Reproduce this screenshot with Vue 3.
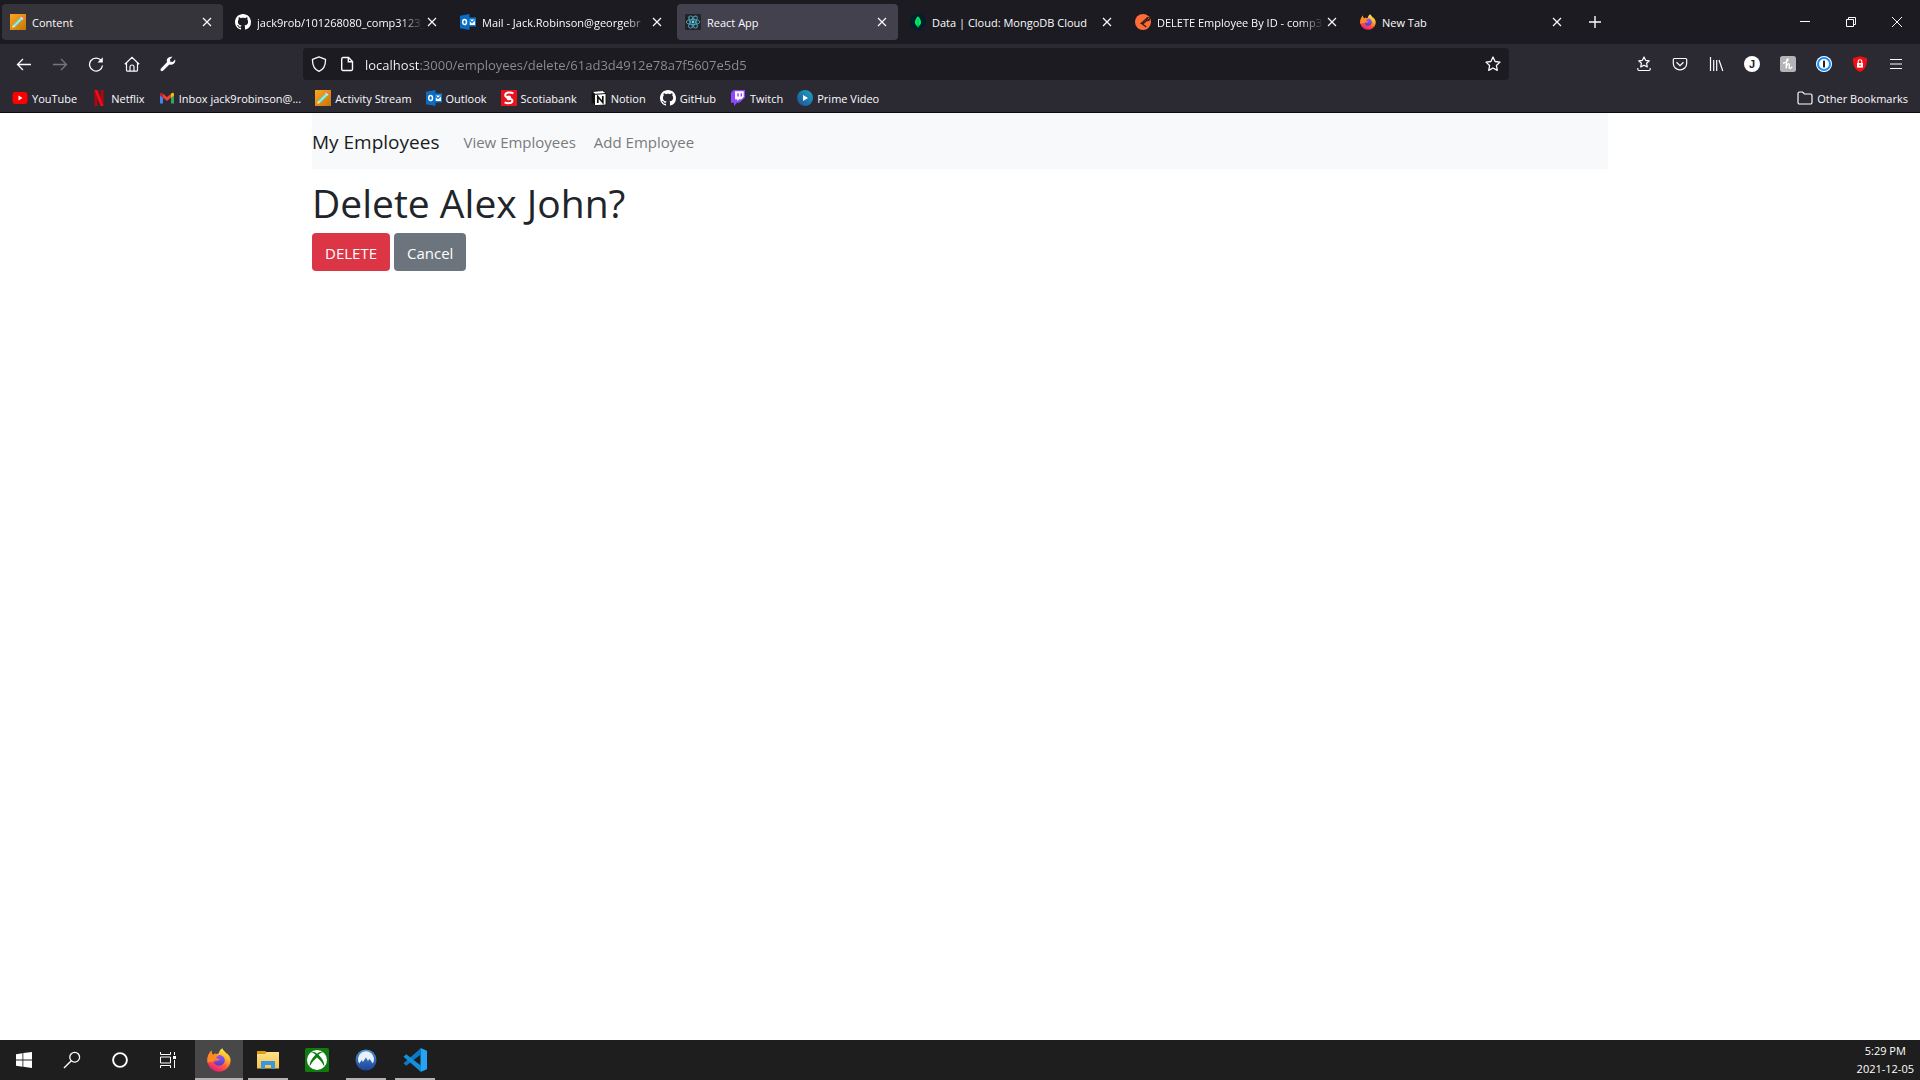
<script setup>
const tabs = [
  { icon: 'pencil', title: 'Content', state: 'hovered' },
  { icon: 'github', title: 'jack9rob/101268080_comp3123_', long: true },
  { icon: 'outlook', title: 'Mail - Jack.Robinson@georgebr', long: true },
  { icon: 'react', title: 'React App', state: 'selected' },
  { icon: 'mongo', title: 'Data | Cloud: MongoDB Cloud' },
  { icon: 'postman', title: 'DELETE Employee By ID - comp3', long: true },
  { icon: 'firefox', title: 'New Tab' },
]

const navButtons = [
  { icon: 'back', label: 'Back' },
  { icon: 'forward', label: 'Forward', dim: true },
  { icon: 'reload', label: 'Reload' },
  { icon: 'home', label: 'Home' },
  { icon: 'wrench', label: 'Developer tools' },
]

const toolButtons = [
  { icon: 'bookmarks', label: 'Bookmarks menu' },
  { icon: 'pocket', label: 'Save to Pocket' },
  { icon: 'library', label: 'Library' },
  { initial: 'J', label: 'Account' },
  { icon: 'honey', label: 'Coupons' },
  { icon: 'onepass', label: 'Password manager' },
  { icon: 'shieldlock', label: 'Privacy protection' },
  { icon: 'menu', label: 'Application menu' },
]

const bookmarks = [
  { icon: 'youtube', title: 'YouTube' },
  { icon: 'netflix', title: 'Netflix' },
  { icon: 'gmail', title: 'Inbox jack9robinson@...' },
  { icon: 'pencil', title: 'Activity Stream' },
  { icon: 'outlook', title: 'Outlook' },
  { icon: 'scotiabank', title: 'Scotiabank' },
  { icon: 'notion', title: 'Notion' },
  { icon: 'github', title: 'GitHub' },
  { icon: 'twitch', title: 'Twitch' },
  { icon: 'prime', title: 'Prime Video' },
]

const systemButtons = [
  { icon: 'windows', label: 'Start' },
  { icon: 'search', label: 'Search' },
  { icon: 'cortana', label: 'Cortana' },
  { icon: 'taskview', label: 'Task View' },
]

const apps = [
  { icon: 'firefox', label: 'Firefox', state: 'active' },
  { icon: 'explorer', label: 'File Explorer', state: 'running' },
  { icon: 'xbox', label: 'Xbox' },
  { icon: 'nord', label: 'NordVPN', state: 'running' },
  { icon: 'vscode', label: 'Visual Studio Code', state: 'running' },
]

const url = 'localhost:3000/employees/delete/61ad3d4912e78a7f5607e5d5'
</script>

<template>
  <div class="screen">
    <svg class="sprite" width="0" height="0" aria-hidden="true">
      <defs>
        <linearGradient id="g-orange" x1="0" y1="0" x2="1" y2="1">
          <stop offset="0" stop-color="#ffa51f" /><stop offset="1" stop-color="#c4750a" />
        </linearGradient>
        <linearGradient id="g-fox" x1="0.8" y1="0" x2="0.3" y2="1">
          <stop offset="0" stop-color="#fff44f" /><stop offset="0.35" stop-color="#ffb52a" />
          <stop offset="0.65" stop-color="#ff5a36" /><stop offset="1" stop-color="#e31587" />
        </linearGradient>
        <linearGradient id="g-foxin" x1="0" y1="0" x2="0" y2="1">
          <stop offset="0" stop-color="#9059ff" /><stop offset="1" stop-color="#5b38c8" />
        </linearGradient>
        <linearGradient id="g-prime" x1="0" y1="1" x2="1" y2="0">
          <stop offset="0" stop-color="#1a4f94" /><stop offset="1" stop-color="#1fa5c4" />
        </linearGradient>
        <linearGradient id="g-nord" x1="0" y1="0" x2="0" y2="1">
          <stop offset="0" stop-color="#4d8fd8" /><stop offset="1" stop-color="#1d4396" />
        </linearGradient>
        <linearGradient id="g-folder" x1="0" y1="0" x2="0" y2="1">
          <stop offset="0" stop-color="#ffe08a" /><stop offset="1" stop-color="#f7c34a" />
        </linearGradient>
      </defs>

      <symbol id="pencil" viewBox="0 0 16 16">
        <rect width="16" height="16" fill="url(#g-orange)" />
        <path d="M2.2 13.8 3 10.6 5.4 13z" fill="#f6e6c8" />
        <path d="M3 10.6 10.3 3.3 12.7 5.7 5.4 13z" fill="#5fd3bd" />
        <path d="M3.8 11.4 11.1 4.1 12 5 4.7 12.3z" fill="#b5f0e4" />
        <path d="M10.3 3.3 11.2 2.4 13.6 4.8 12.7 5.7z" fill="#e6eef2" />
        <path d="M11.2 2.4Q12.2 1.6 13.3 2.7T13.6 4.8z" fill="#e86a9a" />
      </symbol>
      <symbol id="github" viewBox="0 0 16 16">
        <path fill="#fff" d="M8 0C3.58 0 0 3.58 0 8c0 3.54 2.29 6.53 5.47 7.59.4.07.55-.17.55-.38 0-.19-.01-.82-.01-1.49-2.01.37-2.53-.49-2.69-.94-.09-.23-.48-.94-.82-1.13-.28-.15-.68-.52-.01-.53.63-.01 1.08.58 1.23.82.72 1.21 1.87.87 2.33.66.07-.52.28-.87.51-1.07-1.78-.2-3.64-.89-3.64-3.95 0-.87.31-1.59.82-2.15-.08-.2-.36-1.02.08-2.12 0 0 .67-.21 2.2.82.64-.18 1.32-.27 2-.27s1.36.09 2 .27c1.53-1.04 2.2-.82 2.2-.82.44 1.1.16 1.92.08 2.12.51.56.82 1.27.82 2.15 0 3.07-1.87 3.75-3.65 3.95.29.25.54.73.54 1.48 0 1.07-.01 1.93-.01 2.2 0 .21.15.46.55.38A8.01 8.01 0 0 0 16 8c0-4.42-3.58-8-8-8z" />
      </symbol>
      <symbol id="outlook" viewBox="0 0 16 16">
        <path d="M8 3.5h8v9H8z" fill="#0f78d4" />
        <path d="M9.5 5.5h5.5v5.5H9.5z" fill="#fff" />
        <path d="M9.5 6 12 8.6 15 5.6" fill="none" stroke="#0f78d4" stroke-width="1.3" />
        <path d="M0 1.8 9.5 0v16L0 14.2z" fill="#0a6cc4" />
        <ellipse cx="4.6" cy="8" rx="1.9" ry="2.6" fill="none" stroke="#fff" stroke-width="1.5" />
      </symbol>
      <symbol id="react" viewBox="0 0 16 16">
        <rect width="16" height="16" rx="1" fill="#222428" />
        <g fill="none" stroke="#4fa9c2" stroke-width="0.9">
          <ellipse cx="8" cy="8" rx="6.8" ry="2.6" />
          <ellipse cx="8" cy="8" rx="6.8" ry="2.6" transform="rotate(60 8 8)" />
          <ellipse cx="8" cy="8" rx="6.8" ry="2.6" transform="rotate(120 8 8)" />
        </g>
        <circle cx="8" cy="8" r="1.4" fill="#61dafb" />
      </symbol>
      <symbol id="mongo" viewBox="0 0 16 16">
        <circle cx="8" cy="8" r="8" fill="#001e2b" />
        <path d="M8 2.2C9.6 4 11 5.8 11 8.2c0 2-1.2 3.4-2.6 4.3L8.2 14h-.4l-.2-1.5C6.2 11.6 5 10.2 5 8.200 5 5.800 6.400 4 8 2.200z" fill="#00ed64" />
        <path d="M8 5v7.500" stroke="#00a34a" stroke-width="0.7" />
      </symbol>
      <symbol id="postman" viewBox="0 0 16 16">
        <circle cx="8" cy="8" r="8" fill="#ff6c37" />
        <path d="M12 4.2 6.3 9.3l2 .3 3.400-3M6.300 9.300l5 3.700M12 4.200l1.600 1.700-1.700 1" fill="none" stroke="#33201b" stroke-width="1.3" />
        <circle cx="13" cy="5" r="1.7" fill="none" stroke="#33201b" stroke-width="1" />
      </symbol>
      <symbol id="firefox" viewBox="0 0 24 24">
        <path d="M22.5 8.600C21.800 6.900 20.500 5.400 19.600 4.900c.7 1.200.9 2 .9 2.400C19 3.700 16.300 2.900 15.300.3c-2.500 1.500-3.400 4-3.500 5.200-1.200.1-2.300.5-3.200 1-.2-.2-.4-.5-.2-1.200-.9.400-1.600 1-2.100 1.600C5.100 6.500 4.200 4.300 4.600 2.400 2.600 4 .3 8 .4 12.500.6 18.700 5.600 23.700 12 23.700S23.600 18.600 23.600 12.300c0-1.400-.4-2.600-1.100-3.700z" fill="url(#g-fox)" />
        <path d="M12.200 6.900c3.200 0 5.600 2.500 5.600 5.400 0 3.100-2.600 5.400-5.700 5.400-3 0-5.300-2-5.400-4.700.6.500 1.600.7 2.600.3 1.200-.5 1.600-1.200 2.700-1 .5 0 .8-.5.4-1-.6-.8-1.800-1-2.800-.7C9 9 8.500 8.200 9 7.500c.8-.4 2.200-.6 3.200-.6z" fill="url(#g-foxin)" />
        <path d="M4.600 2.400c-.4 1.900.5 4.100 1.700 4.500.5-.6 1.200-1.200 2.100-1.600-.2.700 0 1 .2 1.200.8.200 2.500.2 3.400.5-.6 1.300-2.400 1.700-2.800 2.300-.2.300 0 .9.200 1.500-1.700.5-3 1.500-3 3.200-1.500-.4-3.400-.8-5.800 1C-.7 9 2.600 4 4.600 2.400z" fill="#ff8a25" />
      </symbol>
      <symbol id="youtube" viewBox="0 0 16 16">
        <rect x="0.5" y="2" width="15" height="12" rx="3" fill="#f00" />
        <path d="M6.5 5.6 10.500 8l-4 2.400z" fill="#fff" />
      </symbol>
      <symbol id="netflix" viewBox="0 0 16 16">
        <path d="M3.500 0h3v16h-3zM9.500 0h3v16h-3z" fill="#b1060f" />
        <path d="M3.500 0h3l6 16h-3z" fill="#f20a18" />
      </symbol>
      <symbol id="gmail" viewBox="0 0 16 16">
        <path d="M1 4v9.500h3V7z" fill="#4285f4" />
        <path d="M15 4v9.500h-3V7z" fill="#34a853" />
        <path d="M4 3.800 8 7l4-3.200v4L8 11 4 7.800z" fill="#ea4335" />
        <path d="M1 4.500C1 2.500 2.500 2.300 4 3.800v4L1 5.600z" fill="#c5221f" />
        <path d="M15 4.500c0-2-1.500-2.200-3-.7v4l3-2.200z" fill="#fbbc04" />
      </symbol>
      <symbol id="scotiabank" viewBox="0 0 16 16">
        <rect width="16" height="16" fill="#ec111a" />
        <path d="M12.400 3.300C9.500 1.800 4.300 2 4.200 5.300c0 3.600 7.200 2 7.200 5.400 0 2.600-4.400 3.200-7.800 1.600" fill="none" stroke="#fff" stroke-width="2" />
        <circle cx="7.800" cy="8" r="2.400" fill="#fff" />
      </symbol>
      <symbol id="notion" viewBox="0 0 16 16">
        <path d="M1 1.500 11.500.6 15 3v12L4 15.600 1 12.500z" fill="#fff" stroke="#111" stroke-width="0.9" />
        <path d="M1 1.500 4 4.300V15.600L1 12.500z" fill="#111" />
        <path d="M1.500 2 4 4.300l11-.8" fill="none" stroke="#111" />
        <path d="M6.800 13V6.500l5 6V6" fill="none" stroke="#111" stroke-width="1.700" />
      </symbol>
      <symbol id="twitch" viewBox="0 0 16 16">
        <path d="M3.500 0 1 2.800v10h3V16l3-3.200h2.500L15 7.500V0z" fill="#9146ff" />
        <path d="M5 1.200h8.700V7l-2.300 2.300H9.200L7.200 11.200V9.300H5z" fill="#fff" />
        <path d="M8 3.300v3.200M11.300 3.300v3.200" stroke="#9146ff" stroke-width="1.500" />
      </symbol>
      <symbol id="prime" viewBox="0 0 16 16">
        <circle cx="8" cy="8" r="8" fill="url(#g-prime)" />
        <path d="M6 5 11 8l-5 3z" fill="#fff" />
      </symbol>
      <symbol id="folder" viewBox="0 0 16 16">
        <path d="M1 12.500v-9A1.500 1.500 0 0 1 2.500 2h3L7.500 4h6A1.500 1.500 0 0 1 15 5.500v7a1.500 1.500 0 0 1-1.500 1.500h-11A1.500 1.500 0 0 1 1 12.500z" fill="none" stroke="#fbfbfe" stroke-width="1.200" />
      </symbol>

      <symbol id="close" viewBox="0 0 16 16"><path d="M4 4l8 8M12 4l-8 8" stroke="currentColor" stroke-width="1.200" /></symbol>
      <symbol id="plus" viewBox="0 0 16 16"><path d="M8 2v12M2 8h12" stroke="currentColor" stroke-width="1.400" /></symbol>
      <symbol id="minimize" viewBox="0 0 16 16"><path d="M3 7.500h10" stroke="currentColor" /></symbol>
      <symbol id="restore" viewBox="0 0 16 16"><path d="M3.500 5.500h7v7h-7zM5.500 5.500v-2h7v7h-2" fill="none" stroke="currentColor" /></symbol>
      <symbol id="exit" viewBox="0 0 16 16"><path d="M3 3l10 10M13 3 3 13" stroke="currentColor" /></symbol>

      <symbol id="back" viewBox="0 0 16 16"><path d="M15 8.500H1.500M7 3 1.500 8.500 7 14" fill="none" stroke="currentColor" stroke-width="1.300" /></symbol>
      <symbol id="forward" viewBox="0 0 16 16"><path d="M1 8.500h13.500M9 3l5.500 5.500L9 14" fill="none" stroke="currentColor" stroke-width="1.300" /></symbol>
      <symbol id="reload" viewBox="0 0 16 16">
        <path d="M13.300 4.700A6.500 6.500 0 1 0 14.500 9.500" fill="none" stroke="currentColor" stroke-width="1.300" />
        <path d="M14.800 1.200v5.300H9.500z" fill="currentColor" />
      </symbol>
      <symbol id="home" viewBox="0 0 16 16">
        <path d="M.8 8.300 8 1.300l7.200 7M2.500 7v7.300a.8.8 0 0 0 .8.800h9.400a.8.8 0 0 0 .8-.8V7M6 15v-4a2 2 0 0 1 4 0v4" fill="none" stroke="currentColor" stroke-width="1.200" />
      </symbol>
      <symbol id="wrench" viewBox="0 0 16 16">
        <path d="M15.200 3.500 12.700 6 10.300 5.700 10 3.300 12.500.8C10.500.2 7.800 1.200 7 3.200c-.4 1-.3 2 .1 2.900L1 12.600c-.7.8-.6 1.600-.1 2.200.6.500 1.500.5 2.100-.1l6.400-6.200c2.600 1 5.700-1 5.900-3.500z" fill="currentColor" />
      </symbol>
      <symbol id="shield" viewBox="0 0 16 16">
        <path d="M8 .8 14.500 3.300C14.700 8 13.500 13 8 15.400 2.500 13 1.300 8 1.500 3.300z" fill="none" stroke="currentColor" stroke-width="1.300" stroke-linejoin="round" />
      </symbol>
      <symbol id="page" viewBox="0 0 16 16">
        <path d="M9.500 1.500H4A1.300 1.300 0 0 0 2.700 2.800v10.400A1.300 1.300 0 0 0 4 14.500h8.200a1.300 1.300 0 0 0 1.300-1.300V5.500zM9.300 1.700v4h4" fill="none" stroke="currentColor" stroke-width="1.400" />
      </symbol>
      <symbol id="star" viewBox="0 0 16 16">
        <path d="M8 1l2.100 4.500 4.900.6-3.600 3.400.9 4.900L8 12l-4.300 2.400.9-4.900L1 6.100l4.900-.6z" fill="none" stroke="currentColor" stroke-width="1.300" stroke-linejoin="round" />
      </symbol>
      <symbol id="bookmarks" viewBox="0 0 16 16">
        <path d="M8 1l1.600 3.300 3.700.5-2.700 2.500.7 3.600L8 9.200l-3.300 1.700.7-3.600-2.700-2.500 3.700-.5zM1.800 12v1.300A1.200 1.200 0 0 0 3 14.500h10a1.200 1.200 0 0 0 1.200-1.200V12" fill="none" stroke="currentColor" stroke-width="1.200" stroke-linejoin="round" />
      </symbol>
      <symbol id="pocket" viewBox="0 0 16 16">
        <path d="M2.500 2.500h11A1.300 1.300 0 0 1 14.700 4v3.500a6.700 6.400 0 0 1-13.400 0V4a1.300 1.300 0 0 1 1.200-1.500z" fill="none" stroke="currentColor" stroke-width="1.200" />
        <path d="M4.500 6.200 8 9.600l3.500-3.400" fill="none" stroke="currentColor" stroke-width="1.300" />
      </symbol>
      <symbol id="library" viewBox="0 0 16 16">
        <path d="M2.500 1v14M5.700 4v11M8.700 4v11M11 4l3.800 11" stroke="currentColor" stroke-width="1.200" />
      </symbol>
      <symbol id="honey" viewBox="0 0 16 16">
        <rect width="16" height="16" rx="2.500" fill="#b4b4b6" />
        <path d="M3.500 7C6 6.500 8.500 4.500 8 3.200 7 2 6 6 6.200 12.500 6.500 9 8 7.300 9 7.800c1 .6-.3 3.200.3 4.300.6.8 2-.2 2.500-1" fill="none" stroke="#fff" stroke-width="1.300" stroke-linecap="round" />
      </symbol>
      <symbol id="onepass" viewBox="0 0 16 16">
        <circle cx="8" cy="8" r="8" fill="#fff" />
        <circle cx="8" cy="8" r="6" fill="#fff" stroke="#1a8cff" stroke-width="2" />
        <rect x="7" y="4.500" width="2" height="7" rx="0.600" fill="#23222b" />
      </symbol>
      <symbol id="shieldlock" viewBox="0 0 16 16">
        <path d="M8 .2 15 2.200C15.200 8.500 13.800 13.500 8 16 2.200 13.500.8 8.500 1 2.200z" fill="#f40d12" />
        <rect x="5" y="7" width="6" height="4.600" fill="#fff" />
        <path d="M6.200 7V5.500a1.800 1.800 0 0 1 3.600 0V7" fill="none" stroke="#fff" stroke-width="1.100" />
        <circle cx="8" cy="9.200" r="0.800" fill="#f40d12" />
      </symbol>
      <symbol id="menu" viewBox="0 0 16 16"><path d="M2 3.500h12M2 8h12M2 12.500h12" stroke="currentColor" stroke-width="1.200" /></symbol>

      <symbol id="windows" viewBox="0 0 24 24">
        <path d="M4 6.200 10.500 5.200v6.300H4zM11.300 5.100 20 4v7.500h-8.700zM4 12.400h6.500v6.300L4 17.800zM11.300 12.400H20V20l-8.700-1.200z" fill="#fff" />
      </symbol>
      <symbol id="search" viewBox="0 0 24 24">
        <circle cx="14.700" cy="9.200" r="4.900" fill="none" stroke="#fff" stroke-width="1.300" />
        <path d="M11.300 12.700 4 20" stroke="#fff" stroke-width="1.400" />
      </symbol>
      <symbol id="cortana" viewBox="0 0 24 24"><circle cx="12" cy="12" r="6.900" fill="none" stroke="#fff" stroke-width="1.900" /></symbol>
      <symbol id="taskview" viewBox="0 0 24 24">
        <path d="M4.500 4v2.500h10V4M4.500 20v-2.500h10V20M4.500 9h10v6h-10zM18.500 4v3M18.500 12v8" fill="none" stroke="#fff" />
        <path d="M17 8h3v3h-3z" fill="#fff" />
      </symbol>
      <symbol id="explorer" viewBox="0 0 24 24">
        <path d="M1 3h8.500l1.500 2v3H1z" fill="#e09a0a" />
        <path d="M1 6h8l1.500-2H23v16.500H1z" fill="url(#g-folder)" />
        <path d="M5 13h14v8h-4v-4H9v4H5z" fill="#3a96dd" />
      </symbol>
      <symbol id="xbox" viewBox="0 0 24 24">
        <rect width="24" height="24" rx="1.500" fill="#107c10" />
        <circle cx="12" cy="12" r="10" fill="#fff" />
        <path d="M5.500 4.200C8 3.200 10.500 4.500 12 5.700c1.500-1.200 4-2.500 6.500-1.500-2-.4-4 1.300-5 2.500 3 2.800 6.500 7.800 5.600 11.500C17.500 14.800 14.500 11.500 12 9.500c-2.500 2-5.500 5.300-7.100 8.700C4 14.500 7.500 9.500 10.500 6.700c-1-1.200-3-2.900-5-2.500z" fill="#107c10" />
      </symbol>
      <symbol id="nord" viewBox="0 0 24 24">
        <circle cx="12" cy="12" r="10.500" fill="url(#g-nord)" />
        <path d="M5.200 15.500A8 8 0 1 1 18.800 15.500L15.500 10.800 14 13 12 9.500 8.800 14 7.800 12z" fill="#e9f0fa" />
      </symbol>
      <symbol id="vscode" viewBox="0 0 24 24">
        <path d="M17.500 0 24 2.800v18.400L17.500 24z" fill="#24a4f2" />
        <path d="M17.800.2V6.500L3.200 17.700.5 15.300z" fill="#0b78c8" />
        <path d="M17.800 23.800v-6.300L3.200 6.300.5 8.700z" fill="#158fdc" />
      </symbol>
    </svg>

    <header class="browser">
      <div class="tab-strip">
        <div class="tabs" role="tablist">
          <div
            v-for="tab in tabs"
            :key="tab.title"
            class="tab"
            :class="tab.state"
            role="tab"
            :aria-selected="tab.state === 'selected'"
          >
            <svg class="icon"><use :href="'#' + tab.icon" /></svg>
            <span class="tab-title" :class="{ faded: tab.long }">{{ tab.title }}</span>
            <button class="small-button" type="button" aria-label="Close tab">
              <svg class="icon"><use href="#close" /></svg>
            </button>
          </div>
        </div>
        <button class="new-tab" type="button" aria-label="New tab">
          <svg class="icon"><use href="#plus" /></svg>
        </button>
        <div class="window-controls">
          <button type="button" aria-label="Minimize"><svg class="icon"><use href="#minimize" /></svg></button>
          <button type="button" aria-label="Restore"><svg class="icon"><use href="#restore" /></svg></button>
          <button type="button" aria-label="Close window"><svg class="icon"><use href="#exit" /></svg></button>
        </div>
      </div>

      <div class="toolbar">
        <button
          v-for="b in navButtons"
          :key="b.icon"
          class="tool"
          :class="{ dim: b.dim }"
          type="button"
          :aria-label="b.label"
        >
          <svg class="icon"><use :href="'#' + b.icon" /></svg>
        </button>
        <span class="spring"></span>
        <div class="address">
          <svg class="icon tracking"><use href="#shield" /></svg>
          <svg class="icon"><use href="#page" /></svg>
          <input class="url" type="text" :value="url" aria-label="Address" spellcheck="false" />
          <button class="small-button" type="button" aria-label="Bookmark this page">
            <svg class="icon"><use href="#star" /></svg>
          </button>
        </div>
        <span class="spring"></span>
        <button v-for="b in toolButtons" :key="b.label" class="tool" type="button" :aria-label="b.label">
          <svg v-if="b.icon" class="icon"><use :href="'#' + b.icon" /></svg>
          <span v-else class="avatar">{{ b.initial }}</span>
        </button>
      </div>

      <nav class="bookmarks" aria-label="Bookmarks">
        <a v-for="b in bookmarks" :key="b.title" href="#" class="bookmark">
          <svg class="icon"><use :href="'#' + b.icon" /></svg>{{ b.title }}
        </a>
        <a href="#" class="bookmark other"><svg class="icon"><use href="#folder" /></svg>Other Bookmarks</a>
      </nav>
    </header>

    <main class="page">
      <div class="container">
        <nav class="navbar">
          <a class="brand" href="#">My Employees</a>
          <a class="nav-link" href="#">View Employees</a>
          <a class="nav-link" href="#">Add Employee</a>
        </nav>
        <h1>Delete Alex John?</h1>
        <div class="actions">
          <button class="btn danger" type="button">DELETE</button>
          <button class="btn secondary" type="button">Cancel</button>
        </div>
      </div>
    </main>

    <footer class="taskbar">
      <button v-for="b in systemButtons" :key="b.icon" class="system" type="button" :aria-label="b.label">
        <svg class="icon-lg"><use :href="'#' + b.icon" /></svg>
      </button>
      <div class="apps">
        <button v-for="a in apps" :key="a.icon" class="app" :class="a.state" type="button" :aria-label="a.label">
          <svg class="icon-lg"><use :href="'#' + a.icon" /></svg>
        </button>
      </div>
      <div class="clock"><span>5:29 PM</span><span>2021-12-05</span></div>
    </footer>
  </div>
</template>

<style>
body {
  margin: 0;
  background: #fff;
}
</style>

<style scoped>
.screen {
  display: flex;
  flex-direction: column;
  min-height: 100vh;
  font-family: "Segoe UI", "Open Sans", "Noto Sans", sans-serif;
}
.screen * {
  box-sizing: border-box;
}
.sprite {
  position: absolute;
}
button {
  padding: 0;
  border: 0;
  background: none;
  color: inherit;
  font: inherit;
}
a {
  color: inherit;
  text-decoration: none;
}
.icon {
  flex: none;
  display: block;
  width: 16px;
  height: 16px;
}
.icon-lg {
  display: block;
  width: 24px;
  height: 24px;
}

.browser {
  background: #2b2a33;
  border-bottom: 1px solid #0c0c0d;
  color: #fbfbfe;
  font-size: 11px;
}
.tab-strip {
  display: flex;
  height: 44px;
  background: #1c1b22;
}
.tabs {
  display: flex;
  flex: 0 1 1575px;
  gap: 4px;
  min-width: 0;
  padding: 4px 2px;
}
.tab {
  display: flex;
  flex: 1 1 0;
  align-items: center;
  min-width: 0;
  padding: 0 8px;
  border-radius: 4px;
}
.tab.hovered {
  background: #35343a;
}
.tab.selected {
  background: #42414d;
}
.tab-title {
  flex: 1;
  min-width: 0;
  margin-left: 6px;
  overflow: hidden;
  white-space: nowrap;
}
.tab-title.faded {
  mask-image: linear-gradient(to left, transparent, #000 24px);
}
.small-button {
  flex: none;
}
.new-tab {
  display: flex;
  align-items: center;
  justify-content: center;
  width: 40px;
}
.window-controls {
  display: flex;
  margin-left: auto;
}
.window-controls button {
  display: flex;
  align-items: center;
  justify-content: center;
  width: 46px;
}

.toolbar {
  display: flex;
  align-items: center;
  height: 40px;
  padding: 0 6px;
}
.tool {
  display: flex;
  flex: none;
  align-items: center;
  justify-content: center;
  width: 36px;
  height: 32px;
}
.tool.dim {
  color: #77767e;
}
.avatar {
  width: 16px;
  height: 16px;
  border-radius: 50%;
  background: #fff;
  color: #23222b;
  font: bold 11px/16px "Liberation Sans", Arial, sans-serif;
  text-align: center;
}
.spring {
  flex: 1 1 0;
}
.address {
  display: flex;
  flex: 0 1 1206px;
  align-items: center;
  gap: 10px;
  min-width: 0;
  height: 32px;
  padding: 0 8px;
  border-radius: 4px;
  background: #1c1b22;
}
.tracking {
  margin-right: 2px;
}
.url {
  flex: 1;
  min-width: 0;
  padding: 2px 0 0;
  border: 0;
  outline: 0;
  background: linear-gradient(to right, #fbfbfe 55px, #8e8d94 55px) text;
  color: transparent;
  font: inherit;
  font-size: 13px;
}

.bookmarks {
  display: flex;
  gap: 14px;
  height: 28px;
  padding: 0 12px;
}
.bookmark {
  display: flex;
  align-items: center;
  gap: 4px;
  white-space: nowrap;
}
.other {
  margin-left: auto;
}

.page {
  flex: 1;
}
.container {
  max-width: 1320px;
  margin: 0 auto;
  padding: 0 12px;
  color: #212529;
}
.navbar {
  display: flex;
  align-items: center;
  gap: 2px;
  height: 56px;
  padding-top: 2px;
  background: #f8f9fa;
  font-size: 15px;
}
.brand {
  margin-right: 14px;
  color: #1a1b1c;
  font-size: 19px;
}
.nav-link {
  padding: 8px;
  color: #7a7b7c;
}
h1 {
  margin: 10px 0 6px;
  font-size: 39px;
  font-weight: 400;
  line-height: 48px;
}
.actions {
  display: flex;
  gap: 4px;
}
.btn {
  height: 38px;
  padding: 2px 13px 0;
  border-radius: 4px;
  color: #fff;
  font-size: 15px;
}
.danger {
  background: #dc3545;
}
.secondary {
  background: #6c757d;
}

.taskbar {
  display: flex;
  height: 40px;
  background: #1e1e1e;
  color: #fff;
  font-size: 11px;
}
.system {
  display: flex;
  align-items: center;
  justify-content: center;
  width: 48px;
}
.apps {
  display: flex;
  gap: 1px;
  padding-left: 3px;
}
.app {
  display: flex;
  align-items: center;
  justify-content: center;
  width: 48px;
}
.app.active {
  border-bottom: 2px solid #b4b2b3;
  background: #484848;
  padding-top: 2px;
}
.app.running {
  background: linear-gradient(#b4b2b3, #b4b2b3) center bottom / 40px 2px no-repeat;
}
.clock {
  display: flex;
  flex-direction: column;
  align-items: center;
  justify-content: center;
  margin-left: auto;
  padding-right: 6px;
  line-height: 18px;
}
</style>
